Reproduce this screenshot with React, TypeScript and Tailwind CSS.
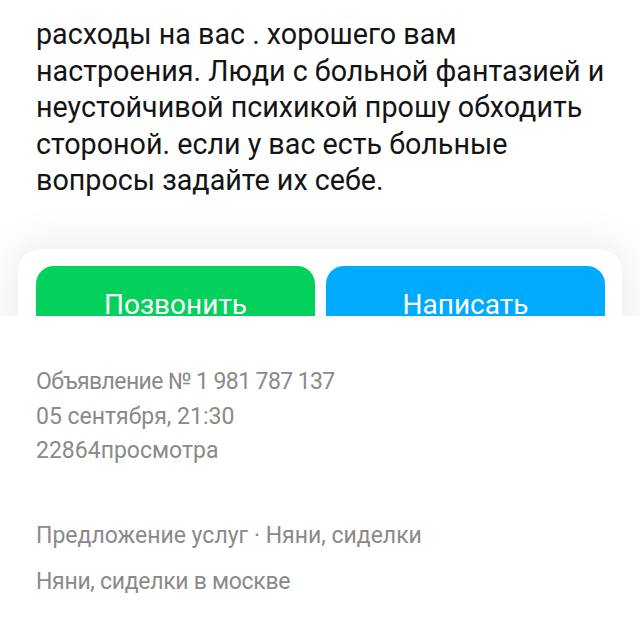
import React from "react";

export default function App() {
  const lines = [
    "расходы на вас . хорошего вам",
    "настроения. Люди с больной фантазией и",
    "неустойчивой психикой прошу обходить",
    "стороной. если у вас есть больные",
    "вопросы задайте их себе.",
  ];
  return (
    <div className="w-[640px] h-[640px] bg-white overflow-hidden" style={{ fontFamily: "Roboto, 'Noto Sans', sans-serif" }}>
      <div className="h-[316px] overflow-hidden bg-white relative">
        <div className="pt-[16px] px-[36px] text-[28.7px] leading-[36.5px] text-[#141414]">
          {lines.map((l, i) => (
            <div key={i} className="whitespace-nowrap">{l}</div>
          ))}
        </div>
        <div className="mt-[50px] mx-[18px] bg-white rounded-[22px] shadow-[0_0_48px_rgba(0,0,0,0.1)] pt-[17px] pl-[18px] pr-[17px] pb-[17px]">
          <div className="flex gap-[11px]">
            <div className="flex-1 h-[78px] rounded-[18px] bg-[#02d15c] flex items-center justify-center text-white text-[28px]">
              Позвонить
            </div>
            <div className="flex-1 h-[78px] rounded-[18px] bg-[#00aaff] flex items-center justify-center text-white text-[28px]">
              Написать
            </div>
          </div>
        </div>
      </div>
      <div className="bg-white px-[36px] pt-[49px] text-[23px] leading-[34.5px] text-[#8a8a8a]">
        <div className="tracking-[-0.6px]">Объявление № 1 981 787 137</div>
        <div>05 сентября, 21:30</div>
        <div>22864просмотра</div>
        <div className="mt-[50px]">Предложение услуг · Няни, сиделки</div>
        <div className="mt-[12px] tracking-[-0.3px]">Няни, сиделки в москве</div>
      </div>
    </div>
  );
}
